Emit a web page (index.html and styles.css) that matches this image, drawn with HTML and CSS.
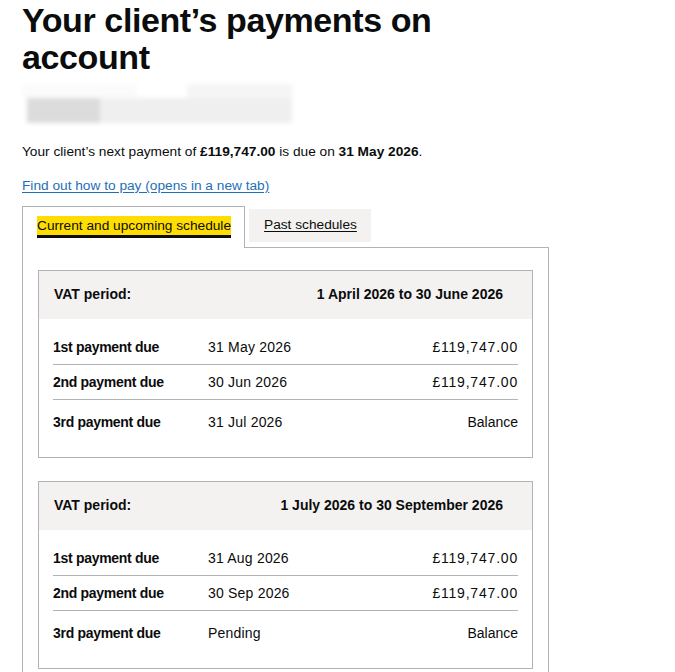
FILE: index.html
```html
<!DOCTYPE html>
<html lang="en">
<head>
<meta charset="utf-8">
<title>Your client’s payments on account</title>
<link rel="stylesheet" href="styles.css">
</head>
<body>
<main class="page">
  <h1 class="title">Your client’s payments on account</h1>
  <div class="redacted" aria-hidden="true">
    <div class="redacted-top"><span class="r1"></span><span class="r2"></span></div>
    <div class="redacted-bottom"><span class="r3"></span><span class="r4"></span></div>
  </div>
  <p class="lead">Your client’s next payment of <strong>£119,747.00</strong> is due on <strong>31 May 2026</strong>.</p>
  <p class="linkline"><a class="link" href="#">Find out how to pay (opens in a new tab)</a></p>

  <div class="tabs">
    <ul class="tab-list">
      <li class="tab tab-selected"><a href="#current" class="tab-link">Current and upcoming schedule</a></li>
      <li class="tab"><a href="#past" class="tab-link">Past schedules</a></li>
    </ul>
    <section class="panel" id="current">
      <div class="card">
        <div class="card-head">
          <span>VAT period:</span>
          <span>1 April 2026 to 30 June 2026</span>
        </div>
        <div class="card-body">
          <div class="row"><span class="lbl">1st payment due</span><span class="date">31 May 2026</span><span class="amt">£119,747.00</span></div>
          <div class="row"><span class="lbl">2nd payment due</span><span class="date">30 Jun 2026</span><span class="amt">£119,747.00</span></div>
          <div class="row row-last"><span class="lbl">3rd payment due</span><span class="date">31 Jul 2026</span><span class="amt amt-text">Balance</span></div>
        </div>
      </div>
      <div class="card">
        <div class="card-head">
          <span>VAT period:</span>
          <span>1 July 2026 to 30 September 2026</span>
        </div>
        <div class="card-body">
          <div class="row"><span class="lbl">1st payment due</span><span class="date">31 Aug 2026</span><span class="amt">£119,747.00</span></div>
          <div class="row"><span class="lbl">2nd payment due</span><span class="date">30 Sep 2026</span><span class="amt">£119,747.00</span></div>
          <div class="row row-last"><span class="lbl">3rd payment due</span><span class="date">Pending</span><span class="amt amt-text">Balance</span></div>
        </div>
      </div>
    </section>
  </div>
</main>
</body>
</html>
```
FILE: styles.css
```css
* { box-sizing: border-box; }
html, body { margin: 0; padding: 0; background: #fff; }
body {
  font-family: "Liberation Sans", Arial, sans-serif;
  color: #0b0c0c;
  font-size: 13.7px;
  line-height: 18.75px;
}
.page { padding: 0 22px; width: 571px; }
.title {
  font-size: 34px;
  line-height: 37px;
  font-weight: 700;
  margin: 2px 0 0;
  letter-spacing: -0.4px;
}
.redacted {
  margin-top: 8px;
  width: 270px;
  height: 39px;
  filter: blur(2px);
  display: flex;
  flex-direction: column;
}
.redacted-top { height: 14px; display: flex; }
.redacted-top .r1 { width: 120px; background: #fbfbfb; }
.redacted-top .r2 { width: 110px; margin-left: 50px; background: #f5f5f5; }
.redacted-bottom { flex: 1; display: flex; margin-left: 5px; }
.redacted-bottom .r3 { width: 73px; background: #dcdcdc; }
.redacted-bottom .r4 { flex: 1; background: #efefef; }
.lead { margin: 20px 0 0; }
.linkline { margin: 15px 0 0; }
.link { color: #1d70b8; text-decoration: underline; text-underline-offset: 2px; }

.tabs { margin-top: 10px; width: 527px; }
.tab-list {
  list-style: none;
  margin: 0 0 -1px;
  padding: 0;
  display: flex;
  align-items: flex-end;
}
.tab {
  background: #f3f2f1;
  margin-right: 4px;
  margin-bottom: 6px;
  height: 33px;
  padding: 0 14px 0 15px;
  display: flex;
  align-items: center;
}
.tab-link { color: #0b0c0c; text-decoration: underline; text-underline-offset: 2px; }
.tab-selected {
  background: #fff;
  border: 1px solid #b1b4b6;
  border-bottom: 0;
  margin-bottom: 0;
  height: 42px;
  padding: 10px 13px 0 14px;
  align-items: flex-start;
  position: relative;
  z-index: 1;
}
.tab-selected .tab-link {
  background: #ffdd00;
  text-decoration: none;
  box-shadow: 0 -1px #ffdd00, 0 3px #0b0c0c;
}
.panel {
  border: 1px solid #b1b4b6;
  padding: 22px 15px 30px;
}
.card {
  border: 1px solid #b1b4b6;
  margin-bottom: 23px;
}
.card-head {
  background: #f3f2f1;
  height: 48px;
  display: flex;
  align-items: center;
  justify-content: space-between;
  padding: 0 29px 0 15px;
  font-weight: 700;
  font-size: 14px;
}
.card-body { padding: 11px 14px 18px; font-size: 14px; }
.row {
  display: grid;
  grid-template-columns: 155px 1fr auto;
  padding: 8px 0 8px;
  border-bottom: 1px solid #b1b4b6;
  line-height: 18px;
}
.row-last { border-bottom: 0; padding-top: 13px; }
.lbl { font-weight: 700; letter-spacing: -0.3px; }
.amt { text-align: right; letter-spacing: 0.8px; }
.amt-text { letter-spacing: 0; }
.date { letter-spacing: 0.2px; }
```
